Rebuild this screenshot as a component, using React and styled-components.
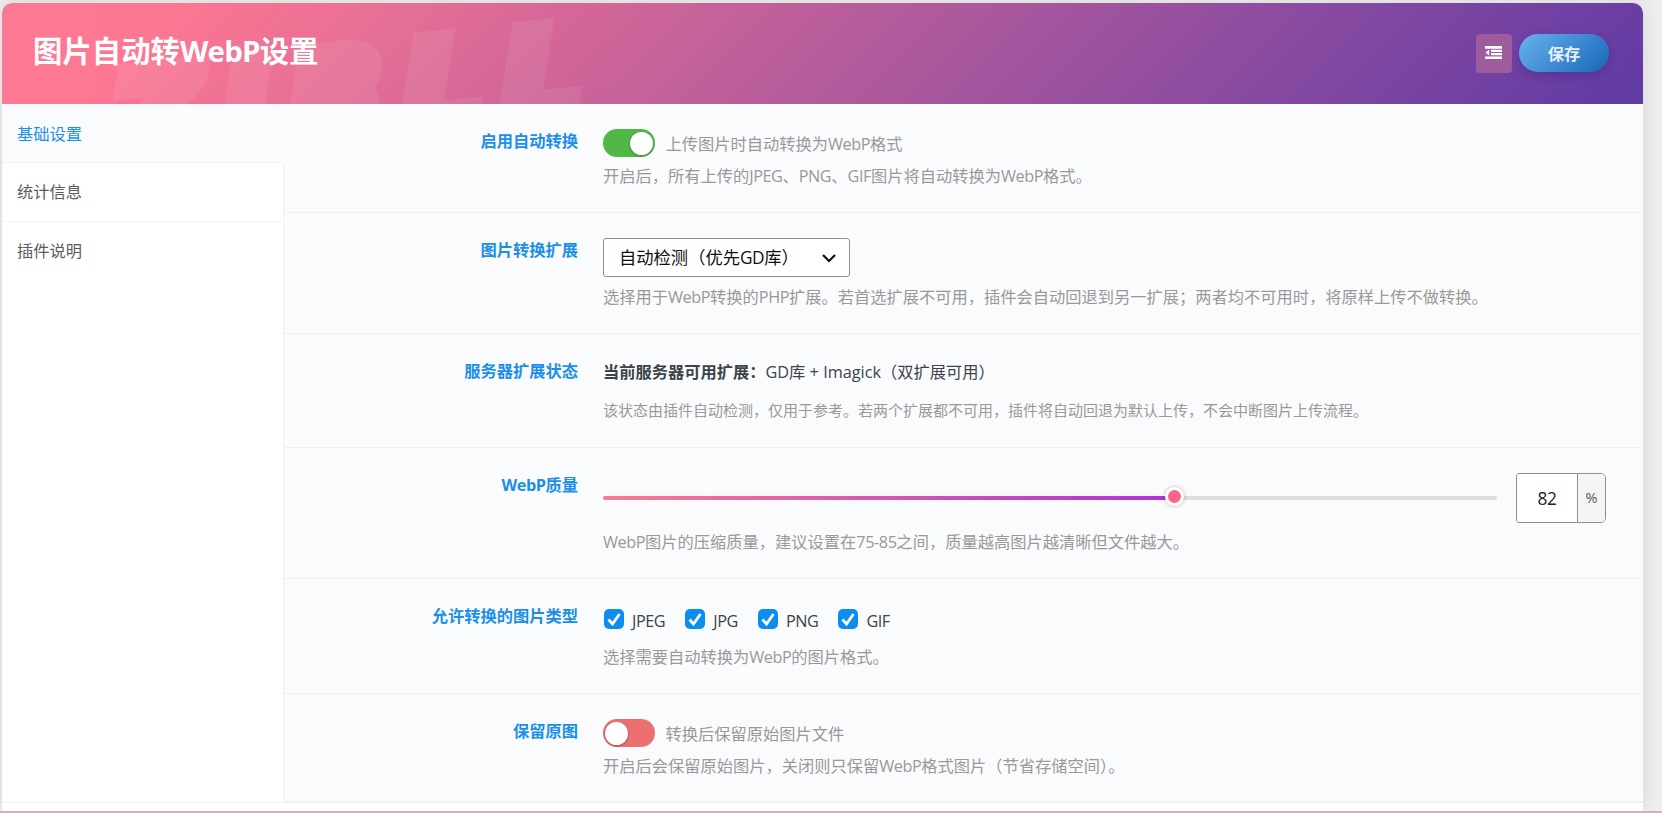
import React, { useState } from "react";

import styled, { createGlobalStyle } from "styled-components";

const GlobalStyle = createGlobalStyle`
  * {
    box-sizing: border-box;
  }

  body {
    margin: 0;
    height: 813px;
    overflow: hidden;
    background: #eeeeee;
    color: #3c434a;
    font-family: "Open Sans", "Noto Sans CJK SC", sans-serif;
    font-size: 16.25px;
    line-height: 24px;
  }
`;

const Page = styled.div`
  display: flex;
  flex-direction: column;
  height: 813px;
  padding: 3px 19px 0 2px;
  overflow: hidden;
`;

const Panel = styled.div`
  flex: 1;
  display: flex;
  flex-direction: column;
  border-radius: 10px 10px 0 0;
  background: #fff;
  box-shadow: 0 0 20px rgba(0, 0, 0, 0.1);
`;

const Header = styled.header`
  position: relative;
  display: flex;
  align-items: flex-start;
  justify-content: space-between;
  height: 101px;
  padding: 30px 34px 0 31px;
  overflow: hidden;
  border-radius: 10px 10px 0 0;
  background: linear-gradient(135deg, #fd7893 10%, #5f3aa5 100%);
`;

const Watermark = styled.span`
  position: absolute;
  left: 110px;
  top: 32px;
  color: #fff;
  opacity: 0.07;
  font: italic bold 120px/1 "DejaVu Sans", sans-serif;
  letter-spacing: 23px;
  -webkit-text-stroke: 19px #fff;
  transform: rotate(-6deg) skewX(-4deg);
  white-space: nowrap;
`;

const Title = styled.h1`
  position: relative;
  margin: 0;
  color: #fff;
  font-size: 29.4px;
  font-weight: 700;
  line-height: 36px;
`;

const Actions = styled.div`
  display: flex;
  gap: 7px;
  padding-top: 1px;
`;

const IconButton = styled.button`
  display: flex;
  align-items: center;
  justify-content: center;
  width: 36px;
  height: 39px;
  padding: 0 1px 2px 0;
  border: 0;
  border-radius: 4px;
  background: #9d5c9c;
`;

const SaveButton = styled.button`
  width: 90px;
  height: 38px;
  padding: 0;
  border: 0;
  border-radius: 19px;
  background: linear-gradient(135deg, #68b2ee, #1a66b8);
  box-shadow: 0 4px 10px rgba(40, 30, 110, 0.3);
  color: #e6f0fb;
  font-family: inherit;
  font-size: 16.25px;
  font-weight: 700;
`;

const Body = styled.div`
  display: flex;
  height: 699px;
  border-bottom: 1px solid #eeeeee;
`;

const Nav = styled.nav`
  width: 282px;
`;

const NavItem = styled.div`
  height: 59px;
  padding: ${(props) => (props.$active ? 18 : 17)}px 15px 0;
  border-right: 1px solid ${(props) => (props.$active ? "#fafbfd" : "#eff0f2")};
  border-bottom: 1px solid ${(props) => (props.$last ? "#fff" : "#f3f4f6")};
  background: ${(props) => (props.$active ? "#fafbfd" : "#fff")};
  color: ${(props) => (props.$active ? "#1e8fe8" : "#5c5c5c")};
`;

const NavFill = styled.div`
  height: 521px;
  border-right: 1px solid #eff0f2;
`;

const Fields = styled.div`
  flex: 1;
  background: #fafbfd;
`;

const Field = styled.section`
  display: flex;
  gap: 25px;
  height: ${(props) => props.$height}px;
  padding: 25px 37px 0 0;
  border-bottom: 1px solid #eef0f2;
`;

const Label = styled.div`
  width: 294px;
  color: #1b8fea;
  font-weight: 700;
  text-align: right;
`;

const Control = styled.div`
  flex: 1;
`;

const Desc = styled.p`
  margin: ${(props) => props.$top}px 0 0;
  color: #999;
  font-size: ${(props) => (props.$small ? 15 : 16.25)}px;
  white-space: nowrap;
`;

const LatinText = styled.span`
  letter-spacing: ${(props) => (props.$loose ? "0" : "-0.027em")};
`;

const SwitchRow = styled.div`
  display: flex;
  align-items: center;
  gap: 10.5px;
  height: 28px;
  color: #999;
`;

const SwitchText = styled.div`
  padding-top: 2px;
`;

const Track = styled.button`
  display: flex;
  align-items: center;
  justify-content: ${(props) => (props.$on ? "flex-end" : "flex-start")};
  width: 52px;
  height: 28px;
  padding: 0 2px;
  border: 0;
  border-radius: 14px;
  background: ${(props) => (props.$on ? "#50b946" : "#ed7070")};
`;

const Knob = styled.i`
  width: 23px;
  height: 23px;
  border-radius: 50%;
  background: #fff;
  box-shadow: 0 1px 3px rgba(0, 0, 0, 0.3);
`;

const SelectBox = styled.div`
  display: flex;
  align-items: center;
  justify-content: space-between;
  width: 247px;
  height: 39px;
  padding: 1px 13px 0 15px;
  border: 1px solid #8c8f94;
  border-radius: 3px;
  background: #fff;
  color: #111;
  font-size: 17.3px;
`;

const Status = styled.div`
  line-height: 26px;
`;

const SliderRow = styled.div`
  display: flex;
  align-items: center;
  height: 50px;
`;

const SliderTrack = styled.div`
  position: relative;
  width: 894px;
  height: 4px;
  border-radius: 2px;
  background: #dddddd;
`;

const SliderRange = styled.div`
  height: 4px;
  border-radius: 2px;
  background: linear-gradient(135deg, #fd7a8f, #ac33d9);
`;

const Handle = styled.i`
  position: absolute;
  top: -9px;
  width: 19px;
  height: 19px;
  margin-left: -9.5px;
  border: 3px solid #fff;
  border-radius: 50%;
  background: #fd6585;
  box-shadow: 0 0 4px rgba(0, 0, 0, 0.25);
`;

const NumberBox = styled.div`
  display: flex;
  width: 90px;
  height: 50px;
  margin-left: 19px;
  border: 1px solid #8c8f94;
  border-radius: 3px 5px 5px 3px;
  overflow: hidden;
`;

const NumberValue = styled.span`
  width: 61px;
  border-right: 1px solid #8c8f94;
  background: #fff;
  color: #222;
  font-size: 17.3px;
  line-height: 49px;
  text-align: center;
`;

const Unit = styled.span`
  flex: 1;
  background: #f5f5f5;
  color: #555;
  font-size: 14.5px;
  line-height: 48px;
  text-align: center;
`;

const Checks = styled.div`
  display: flex;
  gap: 20px;
  height: 30px;
  padding: 5px 0 0 1px;
`;

const Check = styled.label`
  display: flex;
  align-items: flex-start;
  gap: 8px;
`;

const CheckMark = styled.svg`
  width: 20px;
  height: 20px;
  border-radius: 5px;
  background: #0c8df2;
`;

const navItems = ["基础设置", "统计信息", "插件说明"];

const imageTypes = ["JPEG", "JPG", "PNG", "GIF"];

const Mixed = ({ children, loose }) =>
  children.split(/([A-Za-z0-9%+-]+)/).map((part, idx) =>
    idx % 2 ? (
      <LatinText key={idx} $loose={loose}>
        {part}
      </LatinText>
    ) : (
      part
    )
  );

const Switch = ({ initial, children }) => {
  const [on, setOn] = useState(initial);

  return (
    <SwitchRow>
      <Track $on={on} onClick={() => setOn(!on)}>
        <Knob />
      </Track>
      <SwitchText>
        <Mixed>{children}</Mixed>
      </SwitchText>
    </SwitchRow>
  );
};

const App = () => {
  const [active, setActive] = useState(0);
  const position = 63.9;

  return (
    <Page>
      <GlobalStyle />
      <Panel>
        <Header>
          <Watermark>ZIBLL</Watermark>
          <Title>
            <Mixed>图片自动转WebP设置</Mixed>
          </Title>
          <Actions>
            <IconButton>
              <svg width="17" height="13" viewBox="0 0 17 13" fill="#fff">
                <path d="M0 0h17v2.8H0zM6 3.8h11v2.2H6zM6 7h11v2.2H6zM0 10.6h17V13H0zM4.2 3.4v6L.4 6.4z" />
              </svg>
            </IconButton>
            <SaveButton>保存</SaveButton>
          </Actions>
        </Header>
        <Body>
          <Nav>
            {navItems.map((item, idx) => (
              <NavItem
                key={item}
                $active={idx === active}
                $last={idx === navItems.length - 1}
                onClick={() => setActive(idx)}
              >
                {item}
              </NavItem>
            ))}
            <NavFill />
          </Nav>
          <Fields>
            <Field $height={109}>
              <Label>启用自动转换</Label>
              <Control>
                <Switch initial={true}>上传图片时自动转换为WebP格式</Switch>
                <Desc $top={7}>
                  <Mixed>
                    开启后，所有上传的JPEG、PNG、GIF图片将自动转换为WebP格式。
                  </Mixed>
                </Desc>
              </Control>
            </Field>
            <Field $height={121}>
              <Label>图片转换扩展</Label>
              <Control>
                <SelectBox>
                  <div>
                    <Mixed>自动检测（优先GD库）</Mixed>
                  </div>
                  <svg width="14" height="9" viewBox="0 0 14 9" fill="none">
                    <path d="M1 1l6 6 6-6" stroke="#111" strokeWidth="2.2" />
                  </svg>
                </SelectBox>
                <Desc $top={8}>
                  <Mixed>
                    选择用于WebP转换的PHP扩展。若首选扩展不可用，插件会自动回退到另一扩展；两者均不可用时，将原样上传不做转换。
                  </Mixed>
                </Desc>
              </Control>
            </Field>
            <Field $height={114}>
              <Label>服务器扩展状态</Label>
              <Control>
                <Status>
                  <b>当前服务器可用扩展：</b>
                  <Mixed loose>GD库 + Imagick（双扩展可用）</Mixed>
                </Status>
                <Desc $top={13} $small>
                  该状态由插件自动检测，仅用于参考。若两个扩展都不可用，插件将自动回退为默认上传，不会中断图片上传流程。
                </Desc>
              </Control>
            </Field>
            <Field $height={131}>
              <Label>
                <Mixed>WebP质量</Mixed>
              </Label>
              <Control>
                <SliderRow>
                  <SliderTrack>
                    <SliderRange style={{ width: `${position}%` }} />
                    <Handle style={{ left: `${position}%` }} />
                  </SliderTrack>
                  <NumberBox>
                    <NumberValue>
                      <Mixed>82</Mixed>
                    </NumberValue>
                    <Unit>%</Unit>
                  </NumberBox>
                </SliderRow>
                <Desc $top={7}>
                  <Mixed>
                    WebP图片的压缩质量，建议设置在75-85之间，质量越高图片越清晰但文件越大。
                  </Mixed>
                </Desc>
              </Control>
            </Field>
            <Field $height={115}>
              <Label>允许转换的图片类型</Label>
              <Control>
                <Checks>
                  {imageTypes.map((type) => (
                    <Check key={type}>
                      <CheckMark viewBox="0 0 20 20" fill="none">
                        <path
                          d="M4.5 10.5l4 4.5 7-10"
                          stroke="#fff"
                          strokeWidth="2.8"
                        />
                      </CheckMark>
                      <Mixed>{type}</Mixed>
                    </Check>
                  ))}
                </Checks>
                <Desc $top={11}>
                  <Mixed>选择需要自动转换为WebP的图片格式。</Mixed>
                </Desc>
              </Control>
            </Field>
            <Field $height={108}>
              <Label>保留原图</Label>
              <Control>
                <Switch initial={false}>转换后保留原始图片文件</Switch>
                <Desc $top={7}>
                  <Mixed>
                    开启后会保留原始图片，关闭则只保留WebP格式图片（节省存储空间）。
                  </Mixed>
                </Desc>
              </Control>
            </Field>
          </Fields>
        </Body>
      </Panel>
      <BottomLine />
    </Page>
  );
};

const BottomLine = styled.div`
  height: 2px;
  margin: 0 -19px 0 -2px;
  background: #dcaabb;
`;

export default App;
